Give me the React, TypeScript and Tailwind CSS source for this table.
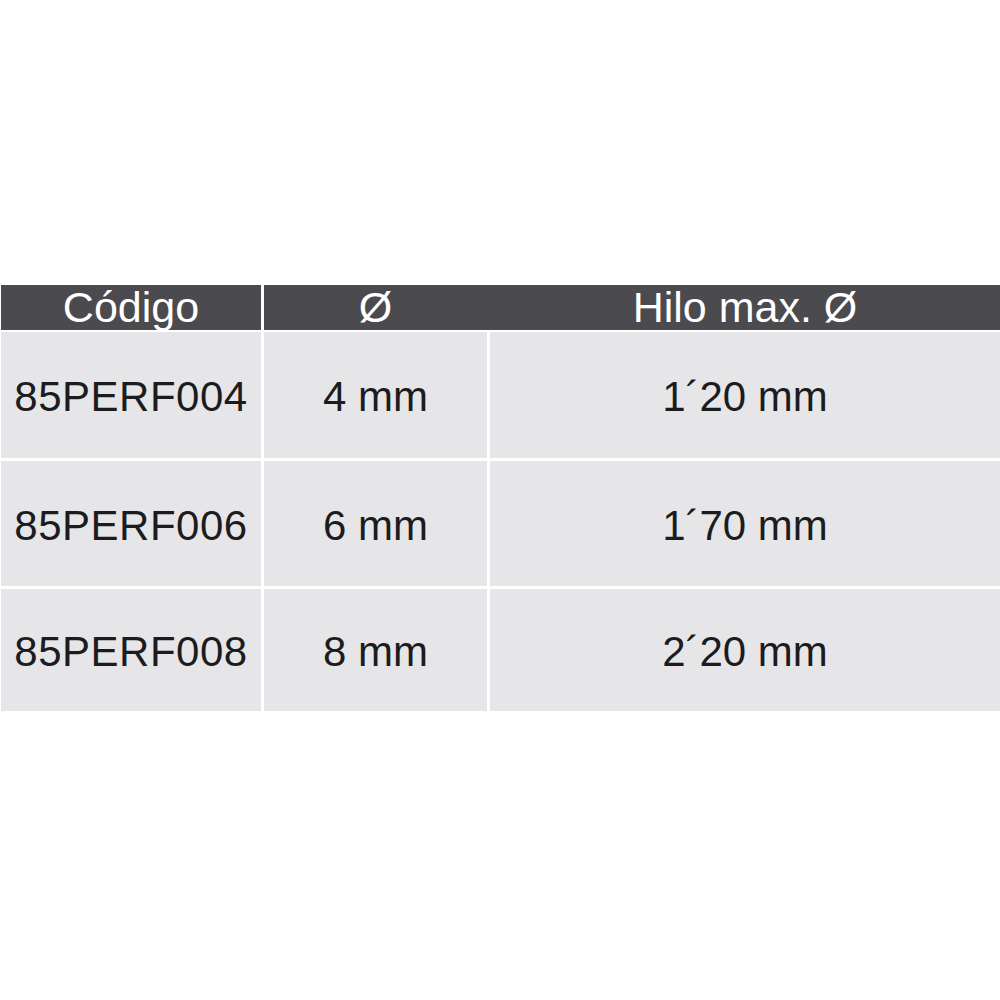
import React from "react";

const rows = [
  ["85PERF004", "4 mm", "1´20 mm", "h-[126px]"],
  ["85PERF006", "6 mm", "1´70 mm", "h-[125px]"],
  ["85PERF008", "8 mm", "2´20 mm", "h-[122px]"],
];

export default function App() {
  return (
    <div
      className="w-[1000px] h-[1000px] bg-white pt-[285px] pl-px"
      style={{ fontFamily: '"Liberation Sans", Arial, sans-serif' }}
    >
      <div className="flex h-[45px] text-white text-[43px] leading-none">
        <div className="w-[260px] bg-[#4b4a4e] flex items-center justify-center">
          Código
        </div>
        <div className="w-[3px]" />
        <div className="flex-1 bg-[#4b4a4e] flex items-center">
          <span className="w-[223px] text-center">Ø</span>
          <span className="flex-1 ml-[3px] text-center">Hilo max. Ø</span>
        </div>
      </div>
      <div className="mt-[2px] grid grid-cols-[260px_223px_1fr] gap-[3px] text-[42px] leading-none text-[#1c1c1e]">
        {rows.map(([a, b, c, h]) => (
          <React.Fragment key={a}>
            <div className={`${h} bg-[#e6e6e8] flex items-center justify-center pt-[4px] tracking-[0.5px]`}>{a}</div>
            <div className={`${h} bg-[#e6e6e8] flex items-center justify-center pt-[4px]`}>{b}</div>
            <div className={`${h} bg-[#e6e6e8] flex items-center justify-center pt-[4px]`}>{c}</div>
          </React.Fragment>
        ))}
      </div>
    </div>
  );
}
